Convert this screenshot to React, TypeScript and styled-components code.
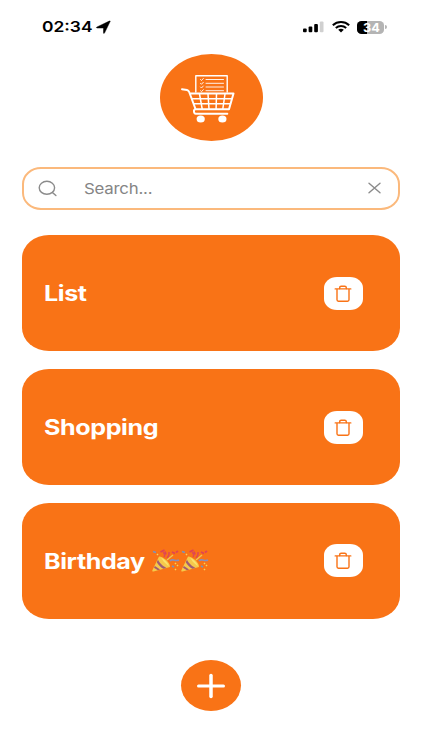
import React from 'react';
import styled, { createGlobalStyle } from 'styled-components';

const ORANGE = '#f97316';

const GlobalStyle = createGlobalStyle`
  * { box-sizing: border-box; }
  body { margin: 0; background: #fff; font-family: Inter, "Liberation Sans", sans-serif; }
`;

const Screen = styled.main`
  width: 422px;
  height: 750px;
  display: flex;
  flex-direction: column;
  align-items: center;
  overflow: hidden;
  background: #fff;
`;

const StatusBar = styled.header`
  width: 100%;
  height: 54.4px;
  flex: none;
  display: flex;
  justify-content: space-between;
  align-items: flex-start;
  padding: 17px 35.5px 0 41.5px;
`;

const StatusGroup = styled.div<{ $gap?: number }>`
  display: flex;
  align-items: center;
  gap: ${(p) => p.$gap ?? 0}px;
  height: 20px;
`;

const Wide = styled.span<{ $stretch: number }>`
  display: inline-block;
  white-space: nowrap;
  transform: scaleX(${(p) => p.$stretch});
  transform-origin: left center;
`;

const Time = styled.div`
  width: 54.5px;
  font-size: 15px;
  line-height: 20px;
  font-weight: 600;
  color: #000;
`;

const BatteryIcon = styled.div`
  display: flex;
  align-items: center;
`;

const BatteryLevel = styled.div`
  width: 27px;
  height: 13px;
  padding-left: 5.5px;
  border-radius: 4.5px / 4px;
  background: linear-gradient(90deg, #000 36%, #b4b4b4 36%);
  color: #fff;
  font-size: 12px;
  font-weight: 700;
  line-height: 13px;
`;

const BatteryTip = styled.div`
  width: 1.5px;
  height: 4px;
  margin-left: 1px;
  border-radius: 0 2px 2px 0;
  background: #b4b4b4;
`;

const Icon = styled.svg`
  display: block;
  flex: none;
  overflow: visible;
`;

const Logo = styled.div`
  width: 103px;
  height: 86.6px;
  flex: none;
  border-radius: 50%;
  background: ${ORANGE};
`;

const SearchBar = styled.div`
  width: 378px;
  height: 43px;
  flex: none;
  margin-top: 26px;
  padding: 0 15px 0 14px;
  display: flex;
  align-items: center;
  border: 2px solid #fbb97c;
  border-radius: 19px / 17px;
`;

const Placeholder = styled.div`
  flex: 1;
  margin-left: 26.5px;
  padding-top: 1px;
  font-size: 15px;
  line-height: 20px;
  letter-spacing: -0.2px;
  color: #858585;
`;

const Lists = styled.section`
  width: 378px;
  margin-top: 25.5px;
  display: flex;
  flex-direction: column;
  gap: 18.3px;
`;

const Card = styled.article`
  height: 115.5px;
  display: flex;
  align-items: center;
  justify-content: space-between;
  padding: 0 37px 0 21.5px;
  border-radius: 27px / 23px;
  background: ${ORANGE};
`;

const CardTitle = styled.h2`
  margin: 0;
  display: flex;
  align-items: center;
  font-size: 21.2px;
  line-height: 26px;
  font-weight: 700;
  letter-spacing: -0.35px;
  color: #fff;
`;

const TitleText = styled.span<{ $width: number }>`
  width: ${(p) => p.$width}px;
`;

const DeleteButton = styled.button`
  width: 39px;
  height: 33px;
  padding: 0;
  display: grid;
  place-items: center;
  border: 0;
  border-radius: 13px / 11px;
  background: #fff;
`;

const AddButton = styled.button`
  width: 60px;
  height: 51px;
  flex: none;
  margin-top: 41.5px;
  padding: 0;
  display: grid;
  place-items: center;
  border: 0;
  border-radius: 50%;
  background: ${ORANGE};
`;

const CartLogo = () => (
  <Icon width="103" height="87" viewBox="0 0 103 87" fill="none" stroke="#fff" strokeLinecap="round" strokeLinejoin="round">
    <path d="M35.800 38V21.800h31.400V38" strokeWidth="1.400" />
    <path d="M46 25.500h17.500M46 29.300h17.500M46 33h17.500M46 36.700h17.500" strokeWidth=".9" />
    <path d="M40.500 25.500l1 1 1.800-2M40.500 29.300l1 1 1.800-2M40.500 33l1 1 1.800-2M40.500 36.700l1 1 1.800-2" strokeWidth=".9" />
    <path d="M22 35.200l5 .8c1.200.3 1.800 1 2.200 2L35.500 55M31 39.500h42.500L69 55.200H35.500c-2.200.3-2 4.400.3 4.600h31.500" strokeWidth="2" />
    <path d="M32.700 44.700h39M34.400 49.800h36M39.500 40l2.700 15M48 40l1 15M56.500 40l-.4 15M65 40l-2.200 15" strokeWidth="1.500" />
    <ellipse cx="40.700" cy="65" rx="4.100" ry="3.500" fill="#fff" stroke="none" />
    <ellipse cx="62.400" cy="65" rx="4.100" ry="3.500" fill="#fff" stroke="none" />
  </Icon>
);

const TrashIcon = () => (
  <Icon width="19" height="17" viewBox="0 0 19 17" fill="none" stroke={ORANGE} strokeWidth="1.400" strokeLinecap="round" strokeLinejoin="round">
    <path d="M1.200 3.900h15.600M3 4v10.800c0 .9.5 1.400 1.400 1.400h9.200c.9 0 1.400-.5 1.400-1.400V4M5.700 4V2.700c0-1 .5-1.500 1.500-1.500h3.600c1 0 1.500.5 1.500 1.500V4" />
  </Icon>
);

const PartyPopper = () => (
  <Icon width="29" height="24" viewBox="0 0 29 24" fill="none">
    <path d="M7 7.500c4 0 11.500 6 11 10.500L1.500 22.500c-1 .2-1.500-.4-1.100-1.200Z" fill="#f5c94b" />
    <path d="M6 10.500c1 3 4.500 6.500 8.500 8.400l-3.200.8C8.500 18 6 15.800 4.800 13.200Z" fill="#a15c72" />
    <path d="M9 8.500c3 1.700 7 5 7.800 8.700L12 13Z" fill="#fae36e" />
    <path d="M2.900 17l5.200 3.500-2.200.7-3.900-2.500Z" fill="#a15c72" />
    <path d="M12 8c1.500-2 .5-3.500-.8-5M15 9c2-2 2.500-3 2-6" stroke="#df4b52" strokeWidth="1.500" />
    <path d="M18 12c3-3 5.500 1 9-1" stroke="#8790bd" strokeWidth="1.700" />
    <path d="M15 11l6-5" stroke="#eec653" strokeWidth="1.300" />
    <path d="M1 2.500l3 1M20 17l2 1" stroke="#7994bd" strokeWidth="1.700" />
    <path d="M8.500 3l4-2M13 2.500l1 3M20 3l3 1.500M24 3.500l2-1.500" stroke="#e14354" strokeWidth="1.700" />
    <path d="M5 5l1 1M23 14l1 1M23 20l1 1M25 16l1 1" stroke="#f5d359" strokeWidth="1.500" />
  </Icon>
);

const entries = [
  { title: 'List', poppers: 0 },
  { title: 'Shopping', poppers: 0 },
  { title: 'Birthday', poppers: 2 },
];

export default function App() {
  return (
    <>
      <GlobalStyle />
      <Screen>
        <StatusBar>
          <StatusGroup>
            <Time><Wide $stretch={1.16}>02:34</Wide></Time>
            <Icon width="15" height="13" viewBox="0 0 15 13">
              <path d="M14.200.3 8.500 12c-.3.600-1 .5-1-.2V7H1.300C.3 7 .2 6.300 1 6L13.300.1c.6-.2 1.100-.2.9.2Z" stroke="#000" strokeWidth=".5" />
            </Icon>
          </StatusGroup>
          <StatusGroup $gap={7.5}>
            <Icon width="21" height="12" viewBox="0 0 21 12">
              <rect y="7.500" width="3.700" height="3.700" rx="1" />
              <rect x="5.600" y="5.500" width="3.700" height="5.700" rx="1" />
              <rect x="11.200" y="3" width="3.700" height="8.200" rx="1" />
              <rect x="16.800" y=".4" width="3.700" height="10.800" rx="1" fill="#d0d0d0" />
            </Icon>
            <Icon width="18" height="12" viewBox="0 0 18 12" fill="none" stroke="#000" strokeWidth="2">
              <path d="M.8 4.200C5.500-.1 12.500-.1 17.200 4.200M3.800 7c3-2.700 7.400-2.700 10.400 0" />
              <path d="M6.200 8.800c1.600-1.300 4-1.300 5.600 0L9 11.500Z" fill="#000" stroke="none" />
            </Icon>
            <BatteryIcon>
              <BatteryLevel><Wide $stretch={1.06}>34</Wide></BatteryLevel>
              <BatteryTip />
            </BatteryIcon>
          </StatusGroup>
        </StatusBar>
        <Logo><CartLogo /></Logo>
        <SearchBar>
          <Icon width="19" height="17" viewBox="0 0 19 17" fill="none" stroke="#8b8b8b" strokeWidth="1.400" strokeLinecap="round">
            <ellipse cx="8.900" cy="7.800" rx="7.700" ry="6.500" />
            <path d="m14.400 12.400 3.500 3.200" />
          </Icon>
          <Placeholder><Wide $stretch={1.12}>Search...</Wide></Placeholder>
          <Icon width="17" height="12" viewBox="0 0 17 12" fill="none" stroke="#8b8b8b" strokeWidth="1.400" strokeLinecap="round">
            <path d="m3 1.200 11 9.600M14 1.200 3 10.800" />
          </Icon>
        </SearchBar>
        <Lists>
          {entries.map(({ title, poppers }) => (
            <Card key={title}>
              <CardTitle>
                <TitleText $width={108}><Wide $stretch={1.185}>{title}</Wide></TitleText>
                {Array.from({ length: poppers }, (_, i) => <PartyPopper key={i} />)}
              </CardTitle>
              <DeleteButton aria-label="Delete list"><TrashIcon /></DeleteButton>
            </Card>
          ))}
        </Lists>
        <AddButton aria-label="Add list">
          <Icon width="30" height="26" viewBox="0 0 30 26" fill="none" stroke="#fff" strokeLinecap="round">
            <path d="M2.500 13h25" strokeWidth="3" />
            <path d="M15 2.500v21" strokeWidth="3.500" />
          </Icon>
        </AddButton>
      </Screen>
    </>
  );
}
